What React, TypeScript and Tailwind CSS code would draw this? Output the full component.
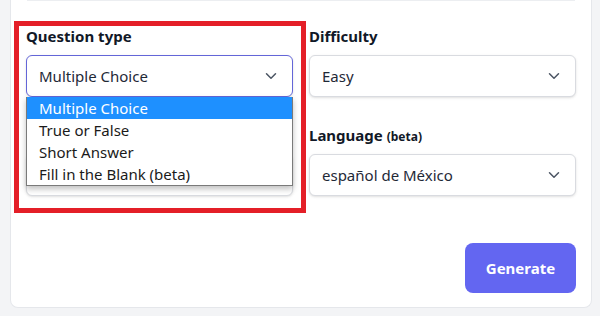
import React from "react";

const Chevron = () => (
  <svg width="12" height="8" viewBox="0 0 12 8" fill="none" className="shrink-0">
    <path d="M1.5 1.75L6 6.25L10.5 1.75" stroke="#4b5563" strokeWidth="1.5" strokeLinecap="round" strokeLinejoin="round" />
  </svg>
);

function Select({ value, focused }: { value: string; focused?: boolean }) {
  return (
    <div
      className={
        focused
          ? "mt-2 flex h-[42px] items-center justify-between rounded-md border border-[#6466d8] bg-white pl-[12px] pr-[15px] text-[15px] text-[#1f2937] shadow-sm"
          : "mt-2 flex h-[42px] items-center justify-between rounded-md border border-[#d9dbe0] bg-white pl-[12px] pr-[15px] text-[15px] text-[#1f2937] shadow-sm"
      }
    >
      <span>{value}</span>
      <Chevron />
    </div>
  );
}

export default function App() {
  const options = ["Multiple Choice", "True or False", "Short Answer", "Fill in the Blank (beta)"];
  return (
    <div
      className="relative min-h-[316px] bg-[#f3f4f6] pl-[10px] pr-[8px]"
      style={{ fontFamily: '"Noto Sans", "Open Sans", sans-serif' }}
    >
      <div className="rounded-b-lg border border-t-0 border-[#e5e7eb] bg-white px-[15px] pb-[14px]">
        <div className="mx-px h-px bg-[#eceef1]" />
        <div className="grid grid-cols-2 gap-x-4 gap-y-[28px] pt-[25px]">
          <div className="relative">
            <div className="h-[21px] text-[15px] font-bold leading-[21px] text-[#111827]">Question type</div>
            <Select value="Multiple Choice" focused />
            <div className="absolute left-0 right-0 top-[71px] z-10 border border-t-0 border-[#7a7a7a] bg-white shadow-[0_3px_6px_rgba(0,0,0,0.25)]">
              {options.map((o, i) => (
                <div
                  key={o}
                  className={
                    i === 0
                      ? "h-[22px] bg-[#1e90ff] pl-3 text-[15px] leading-[22px] text-white"
                      : "h-[22px] pl-3 text-[15px] leading-[22px] text-[#1a1a1a]"
                  }
                >
                  {o}
                </div>
              ))}
            </div>
          </div>
          <div>
            <div className="h-[21px] text-[15px] font-bold leading-[21px] text-[#111827]">Difficulty</div>
            <Select value="Easy" />
          </div>
          <div>
            <div className="h-[21px]" />
            <Select value="" />
          </div>
          <div>
            <div className="h-[21px] text-[15px] font-bold leading-[21px] text-[#111827]">
              Language <span className="text-[12px]">(beta)</span>
            </div>
            <Select value="español de México" />
          </div>
        </div>
        <div className="mt-[47px] flex justify-end">
          <button className="h-[50px] w-[111px] rounded-lg bg-[#6366f1] text-[15px] font-bold text-white">
            Generate
          </button>
        </div>
      </div>
      <div className="pointer-events-none absolute left-[14px] top-[21px] z-20 h-[192px] w-[292px] border-[5px] border-[#e41f28]" />
    </div>
  );
}
